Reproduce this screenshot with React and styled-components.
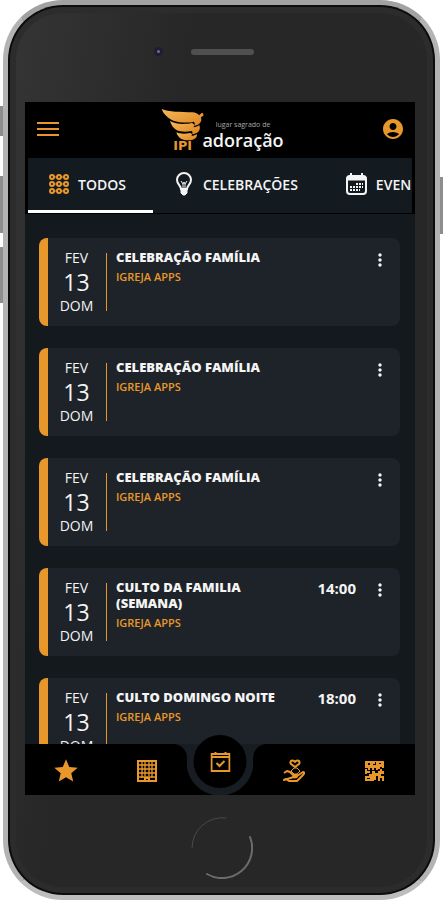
import styled, { ThemeProvider, createGlobalStyle, css } from "styled-components";
import { MdAccountCircle, MdMoreVert, MdStar } from "react-icons/md";

const theme = {
  colors: {
    accent: "#e8982b",
    bar: "#000000",
    screen: "#14191d",
    tabs: "#131a20",
    card: "#1e2329",
    notch: "#171d22",
    text: "#f4f4f4",
    bezel: "#272727",
  },
  font: '"Open Sans", "Noto Sans", sans-serif',
};

const GlobalStyle = createGlobalStyle`
  * {
    box-sizing: border-box;
  }
  body {
    margin: 0;
    background: #ffffff;
    font-family: ${({ theme }) => theme.font};
    color: ${({ theme }) => theme.colors.text};
  }
`;

// Phone
const Page = styled.div`
  position: relative;
  height: 100vh;
  min-height: 640px;
  padding: 0 3px;
  overflow: hidden;
`;
const SideKey = styled.span`
  position: absolute;
  ${({ $side }) => $side}: 0;
  top: ${({ $top }) => $top}px;
  width: 4px;
  height: ${({ $height }) => $height}px;
  background: #8d8d8f;
`;
const Phone = styled.div`
  position: relative;
  display: flex;
  flex-direction: column;
  height: 100%;
  padding: 0 20px 0 17px;
  border: 5px solid #b3b3b3;
  border-top-color: #a2a2a2;
  border-bottom-color: #bdbdbd;
  border-radius: 60px;
  background: linear-gradient(100deg, #353535, ${({ theme }) => theme.colors.bezel} 32%);
  box-shadow: inset 0 0 0 2px #0c0c0c, inset 0 0 0 8px #2c2c2c;
`;
const TopBezel = styled.div`
  display: grid;
  grid-template-columns: 1fr 63px 1fr;
  align-items: center;
  flex: none;
  height: 97px;
  padding: 0 0 4px 4px;
`;
const Camera = styled.span`
  justify-self: end;
  width: 9px;
  height: 9px;
  margin-right: 28px;
  border: 3px solid #201c33;
  border-radius: 50%;
  background: #706a9c;
`;
const Speaker = styled.span`
  height: 6px;
  border-radius: 3px;
  background: #505050;
`;
const BottomBezel = styled.div`
  display: flex;
  align-items: center;
  justify-content: center;
  flex: none;
  height: 100px;
  padding: 6px 0 0 4px;
`;
const HomeButton = styled.button`
  display: flex;
  padding: 0;
  border: 0;
  border-radius: 50%;
  background: transparent;
`;
const Screen = styled.main`
  display: flex;
  flex: 1;
  flex-direction: column;
  min-height: 0;
  background: ${({ theme }) => theme.colors.screen};
`;

// Header
const Header = styled.header`
  display: grid;
  grid-template-columns: 1fr auto 1fr;
  align-items: center;
  flex: none;
  height: 56px;
  padding: 0 10px 2px 12px;
  background: ${({ theme }) => theme.colors.bar};
`;
const IconButton = styled.button`
  display: flex;
  justify-self: ${({ $align }) => $align || "center"};
  padding: 0;
  border: 0;
  background: transparent;
  color: ${({ theme, $plain }) => ($plain ? theme.colors.text : theme.colors.accent)};
  cursor: pointer;
`;
const Brand = styled.div`
  display: flex;
  align-items: flex-end;
  padding-left: 3px;
`;
const BrandText = styled.div`
  display: flex;
  flex-direction: column;
  align-items: center;
  margin-left: -4px;
  padding-bottom: 1px;
`;
const BrandSmall = styled.span`
  font-size: 7px;
  line-height: 10px;
  color: #a8a8a8;
`;
const BrandName = styled.span`
  font-size: 18px;
  font-weight: 600;
  line-height: 20px;
`;

// Tabs
const Tabs = styled.nav`
  display: flex;
  flex: none;
  height: 56px;
  border: solid ${({ theme }) => theme.colors.bar};
  border-width: 0 3px 1px;
  overflow: hidden;
  background: ${({ theme }) => theme.colors.tabs};
`;
const Tab = styled.button`
  display: flex;
  align-items: center;
  flex: none;
  gap: 9px;
  padding: 0 27px 0 21px;
  border: 0;
  border-bottom: 3px solid transparent;
  background: transparent;
  color: ${({ theme }) => theme.colors.text};
  font-family: inherit;
  font-size: 14px;
  font-weight: 600;
  cursor: pointer;
  ${({ $active }) =>
    $active &&
    css`
      border-bottom-color: #ffffff;
    `}
`;

// Agenda
const List = styled.ul`
  display: flex;
  flex: 1;
  flex-direction: column;
  gap: 22px;
  min-height: 0;
  margin: 0;
  padding: 24px 15px 0 14px;
  overflow: hidden;
  list-style: none;
`;
const Card = styled.li`
  display: flex;
  flex: none;
  min-height: 88px;
  padding-right: 10px;
  border-left: 9px solid ${({ theme }) => theme.colors.accent};
  border-radius: 8px;
  background: ${({ theme }) => theme.colors.card};
`;
const DateColumn = styled.div`
  display: flex;
  flex-direction: column;
  align-items: center;
  width: 57px;
  padding: 10px 0;
  font-size: 14px;
  font-weight: 500;
  line-height: 20px;
`;
const Day = styled.span`
  font-size: 23px;
  line-height: 28px;
`;
const Divider = styled.span`
  width: 1px;
  margin: 15px 9px 15px 1px;
  background: ${({ theme }) => theme.colors.accent};
`;
const Info = styled.div`
  flex: 1;
  padding-top: 11px;
`;
const Title = styled.h2`
  margin: 0 0 4px;
  font-size: 13px;
  font-weight: 800;
  line-height: 16px;
`;
const Place = styled.p`
  margin: 0;
  color: ${({ theme }) => theme.colors.accent};
  font-size: 11px;
  font-weight: 600;
  line-height: 16px;
`;
const Hour = styled.time`
  margin: 11px 14px 0 24px;
  font-size: 15px;
  font-weight: 700;
  line-height: 18px;
`;
const CardMenu = styled(IconButton)`
  align-self: flex-start;
  margin-top: 12px;
`;

// Bottom navigation
const BottomNav = styled.nav`
  position: relative;
  display: flex;
  flex: none;
  height: 51px;
  background: ${({ theme }) => theme.colors.notch};
`;
const Wing = styled.div`
  display: grid;
  flex: 1;
  grid-template-columns: 1fr 1fr;
  align-items: center;
  padding-top: 3px;
  border-radius: ${({ $right }) => ($right ? "14px 0 0 0" : "0 14px 0 0")};
  background: ${({ theme }) => theme.colors.bar};
`;
const Notch = styled.div`
  width: 66px;
  padding-top: 18px;
  background: radial-gradient(circle at 50% 0, transparent 33px, #000000 34px) content-box;
  background-origin: content-box;
  &::after {
    content: "";
    display: block;
    height: 33px;
  }
`;
const AgendaButton = styled.button`
  position: absolute;
  left: 50%;
  top: -9px;
  display: flex;
  align-items: center;
  justify-content: center;
  width: 53px;
  height: 53px;
  padding: 0;
  border: 0;
  border-radius: 50%;
  background: ${({ theme }) => theme.colors.bar};
  color: ${({ theme }) => theme.colors.accent};
  transform: translateX(-50%);
  cursor: pointer;
`;

// Icons
const MenuIcon = () => (
  <svg width="22" height="16" viewBox="0 0 22 16" stroke="currentColor" strokeWidth="2">
    <path d="M0 2h22M0 8h22M0 14h22" />
  </svg>
);

const WingLogo = () => (
  <svg width="45" height="43" viewBox="0 0 135 129">
    <defs>
      <linearGradient id="wing" x1="0" y1="0" x2="1" y2="1">
        <stop offset="0" stopColor="#f6b95a" />
        <stop offset="1" stopColor="#dc8420" />
      </linearGradient>
    </defs>
    <g fill="url(#wing)">
      <path d="M2 3C22 13 60 11 94 13q14 1 20 9l9-8q6 2 4 9l-7 5q4 15-9 22-6 3-12 3c3-5 3-9-1-12-14 4-42 4-61-3C22 31 8 20 2 3z" />
      <path d="M27 39c18 11 46 10 66 6 8 3 8 9 4 13 7-1 13-3 18-7 4 12 0 20-10 25-4 2-8 3-12 3 3-4 2-8-2-10-16 3-33 3-46-4-9-6-15-15-18-26z" />
      <path d="M46 73c15 6 28 4 42 2 6 2 6 6 3 9 7-1 12-3 17-6 1 9-4 15-15 18-11 2-24 1-33-4-7-4-12-11-14-19z" />
    </g>
    <text x="37" y="126" fill="#e8982b" fontFamily="DejaVu Sans" fontSize="38" fontWeight="700">
      IPI
    </text>
  </svg>
);

const DotsGridIcon = () => (
  <svg width="20" height="20" viewBox="0 0 20 20" fill="none" stroke="#e8982b" strokeWidth="2">
    {[3, 10, 17].map((y) => [3, 10, 17].map((x) => <circle key={`${x}-${y}`} cx={x} cy={y} r="2" />))}
    <path d="M5 3h3M12 3h3M5 10h3M12 10h3M5 17h3M12 17h3" strokeWidth="1" />
  </svg>
);

const BulbIcon = () => (
  <svg width="20" height="24" viewBox="0 0 20 24" fill="none" stroke="currentColor" strokeWidth="2">
    <path d="M7 17c0-3-4-5-4-9a7 7 0 0 1 14 0c0 4-4 6-4 9z" />
    <path d="M7 9l2 3 1-2 1 2 2-3M9 12v5M11 12v5" strokeWidth="1" />
    <path d="M7 18h6v3l-2 2H9l-2-2z" fill="currentColor" strokeWidth="1" />
  </svg>
);

const CalendarDotsIcon = () => (
  <svg width="21" height="22" viewBox="0 0 21 22" fill="none" stroke="currentColor">
    <rect x="1" y="3" width="19" height="18" rx="3" strokeWidth="2" />
    <path d="M1 7V5a2 2 0 0 1 2-2h15a2 2 0 0 1 2 2v2z" fill="currentColor" />
    <path d="M5 0v4M16 0v4" strokeWidth="2" />
    <path d="M10 11h7M4 14h13M4 17h10" strokeWidth="2" strokeDasharray="2 1" />
  </svg>
);

const BuildingIcon = () => (
  <svg width="22" height="24" viewBox="0 0 22 24" fill="none" stroke="currentColor">
    <path d="M2 2h18v20H2z" strokeWidth="2" />
    <path d="M6 3v16M9 3v14M13 3v14M16 3v16M3 6h16M3 10h16M3 14h16M3 18h16" strokeWidth="1.3" />
    <path d="M2 22h7v-3h4v3h7" strokeWidth="2" />
  </svg>
);

const CalendarCheckIcon = () => (
  <svg width="20" height="20" viewBox="0 0 20 20" fill="none" stroke="currentColor" strokeWidth="2">
    <path d="M1 2h18v17H1z" />
    <path d="M1 5h18" />
    <path d="M5 0v3M10 1v2M15 0v3M6 11l3 3 5-5" />
  </svg>
);

const GivingIcon = () => (
  <svg width="22" height="24" viewBox="0 0 22 24" fill="none" stroke="currentColor" strokeWidth="2" strokeLinejoin="round">
    <path d="M12 8 8 5c-2-3 2-5 4-2 2-3 6-1 4 2z" />
    <path d="M8 12l3-3h3l3 3-3 3h-3z" strokeWidth="1" />
    <path d="M1 14l3-2 3 1 3 3h4c1 2-1 3-5 2M14 17l6-4c2 0 1 2 0 3l-6 6H6l-3-2-2 1z" />
  </svg>
);

const QrIcon = () => (
  <svg width="20" height="21" viewBox="0 0 20 21" fill="currentColor">
    <path d="M0 0h19v7h-2V6h-2v2h-2v1h-2V7H9v2H7V7H5v2H3V7H0z M0 8h2v2h3v2H2v1H0z M7 10h3v2h3v-2h2V8h2v2h2v3h-3v2h3v5h-2v-3h-2v3h-2v-5h-2v4h-2v-6H9v7H0v-5h4v-2h3z" />
    <path d="M3 2h2v2H3zM8 3h2V1h1v3H8zM14 2h2v1h-2zM2 17h3v1H2z" fill="#000000" />
  </svg>
);

const HomeRing = () => (
  <svg width="62" height="62" viewBox="0 0 62 62" fill="none" strokeLinecap="round">
    <path d="M1 31A30 30 0 0 1 35 1" stroke="#4a4a4a" />
    <path d="M59 20A30 30 0 0 1 16 57" stroke="#6c6c6c" strokeWidth="2" />
  </svg>
);

const tabs = [
  { label: "TODOS", icon: DotsGridIcon, active: true },
  { label: "CELEBRAÇÕES", icon: BulbIcon },
  { label: "EVEN", icon: CalendarDotsIcon },
];

const events = [
  { id: 1, title: "CELEBRAÇÃO FAMÍLIA" },
  { id: 2, title: "CELEBRAÇÃO FAMÍLIA" },
  { id: 3, title: "CELEBRAÇÃO FAMÍLIA" },
  { id: 4, title: "CULTO DA FAMILIA (SEMANA)", hour: "14:00" },
  { id: 5, title: "CULTO DOMINGO NOITE", hour: "18:00" },
];

const EventCard = ({ event }) => (
  <Card>
    <DateColumn>
      <span>FEV</span>
      <Day>13</Day>
      <span>DOM</span>
    </DateColumn>
    <Divider />
    <Info>
      <Title>{event.title}</Title>
      <Place>IGREJA APPS</Place>
    </Info>
    {event.hour && <Hour>{event.hour}</Hour>}
    <CardMenu $plain aria-label="Opções">
      <MdMoreVert size={20} />
    </CardMenu>
  </Card>
);

const App = () => (
  <ThemeProvider theme={theme}>
    <GlobalStyle />
    <Page>
      <SideKey $side="left" $top={106} $height={30} />
      <SideKey $side="left" $top={176} $height={57} />
      <SideKey $side="left" $top={247} $height={56} />
      <SideKey $side="right" $top={177} $height={57} />
      <Phone>
        <TopBezel>
          <Camera />
          <Speaker />
        </TopBezel>
        <Screen>
          <Header>
            <IconButton $align="start" aria-label="Menu">
              <MenuIcon />
            </IconButton>
            <Brand>
              <WingLogo />
              <BrandText>
                <BrandSmall>lugar sagrado de</BrandSmall>
                <BrandName>adoração</BrandName>
              </BrandText>
            </Brand>
            <IconButton $align="end" aria-label="Conta">
              <MdAccountCircle size={24} />
            </IconButton>
          </Header>
          <Tabs>
            {tabs.map((tab) => (
              <Tab key={tab.label} $active={tab.active}>
                <tab.icon />
                {tab.label}
              </Tab>
            ))}
          </Tabs>
          <List>
            {events.map((event) => (
              <EventCard key={event.id} event={event} />
            ))}
          </List>
          <BottomNav>
            <Wing>
              <IconButton aria-label="Favoritos">
                <MdStar size={28} />
              </IconButton>
              <IconButton aria-label="Igreja">
                <BuildingIcon />
              </IconButton>
            </Wing>
            <Notch />
            <Wing $right>
              <IconButton aria-label="Contribuir">
                <GivingIcon />
              </IconButton>
              <IconButton aria-label="QR Code">
                <QrIcon />
              </IconButton>
            </Wing>
            <AgendaButton aria-label="Agenda">
              <CalendarCheckIcon />
            </AgendaButton>
          </BottomNav>
        </Screen>
        <BottomBezel>
          <HomeButton aria-label="Início">
            <HomeRing />
          </HomeButton>
        </BottomBezel>
      </Phone>
    </Page>
  </ThemeProvider>
);

export default App;
